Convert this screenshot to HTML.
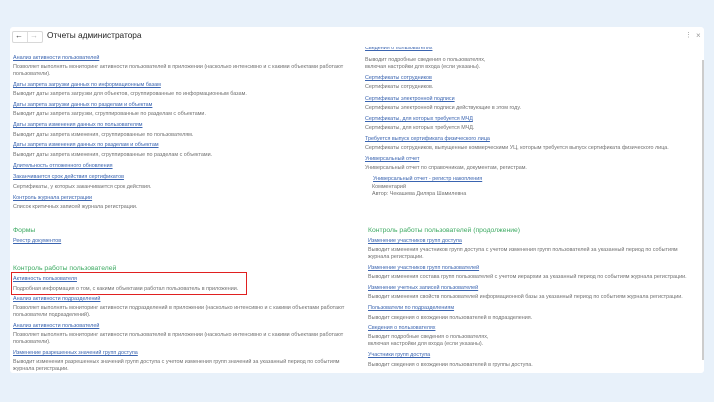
<!DOCTYPE html>
<html><head><meta charset="utf-8"><style>
html,body{margin:0;padding:0;width:714px;height:402px;background:#e8f1fa;overflow:hidden;font-family:"Liberation Sans","Noto Sans CJK SC",sans-serif}
.p{position:absolute;left:10px;top:27px;width:694px;height:346px;background:#fff;border-radius:3px}
.w{position:absolute;left:0;top:2px;width:714px;height:400px}
.t{position:absolute;white-space:nowrap;font-size:5.4px;line-height:7px;color:#6f6f6f}
.l{color:#3a64b0;text-decoration:underline}
.g{color:#3daa62;font-size:6.8px;line-height:9px}
</style></head><body>
<div class="p"></div>
<div style="position:absolute;left:12px;top:31px;width:29px;height:10px;border:1px solid #d8d8d8;border-radius:2px;background:#fff"></div>
<div style="position:absolute;left:27px;top:32px;width:1px;height:10px;background:#ddd"></div>
<div class="t" style="left:15px;top:31px;font-size:8px;line-height:10px;color:#333">&#8592;</div>
<div class="t" style="left:30px;top:31px;font-size:8px;line-height:10px;color:#bbb">&#8594;</div>
<div class="t" style="left:47px;top:30px;font-size:8.3px;line-height:11px;color:#222">Отчеты администратора</div>
<div class="t" style="left:685px;top:31px;font-size:7px;line-height:10px;color:#999">&#8942;</div>
<div class="t" style="left:696px;top:31px;font-size:8px;line-height:10px;color:#999">&#215;</div>
<div style="position:absolute;left:702px;top:60px;width:2px;height:300px;background:#ccc"></div>
<div class="w">
<div class="t l" style="left:13px;top:53px">Анализ активности пользователей</div>
<div class="t" style="left:13px;top:62px">Позволяет выполнять мониторинг активности пользователей в приложении (насколько интенсивно и с какими объектами работают</div>
<div class="t" style="left:13px;top:69px">пользователи).</div>
<div class="t l" style="left:13px;top:80px">Даты запрета загрузки данных по информационным базам</div>
<div class="t" style="left:13px;top:89px">Выводит даты запрета загрузки для объектов, сгруппированные по информационным базам.</div>
<div class="t l" style="left:13px;top:100px">Даты запрета загрузки данных по разделам и объектам</div>
<div class="t" style="left:13px;top:109px">Выводит даты запрета загрузки, сгруппированные по разделам с объектами.</div>
<div class="t l" style="left:13px;top:120px">Даты запрета изменения данных по пользователям</div>
<div class="t" style="left:13px;top:130px">Выводит даты запрета изменения, сгруппированные по пользователям.</div>
<div class="t l" style="left:13px;top:140px">Даты запрета изменения данных по разделам и объектам</div>
<div class="t" style="left:13px;top:150px">Выводит даты запрета изменения, сгруппированные по разделам с объектами.</div>
<div class="t l" style="left:13px;top:161px">Длительность отложенного обновления</div>
<div class="t l" style="left:13px;top:172px">Заканчивается срок действия сертификатов</div>
<div class="t" style="left:13px;top:182px">Сертификаты, у которых заканчивается срок действия.</div>
<div class="t l" style="left:13px;top:193px">Контроль журнала регистрации</div>
<div class="t" style="left:13px;top:202px">Список критичных записей журнала регистрации.</div>

<div class="t g" style="left:13px;top:224px">Формы</div>
<div class="t l" style="left:13px;top:236px">Реестр документов</div>
<div class="t g" style="left:13px;top:262px">Контроль работы пользователей</div>
<div style="position:absolute;left:11px;top:270px;width:234px;height:21px;border:1.5px solid #e02020"></div>
<div class="t l" style="left:13px;top:274px">Активность пользователя</div>
<div class="t" style="left:13px;top:284px">Подробная информация о том, с какими объектами работал пользователь в приложении.</div>
<div class="t l" style="left:13px;top:294px">Анализ активности подразделений</div>
<div class="t" style="left:13px;top:303px">Позволяет выполнять мониторинг активности подразделений в приложении (насколько интенсивно и с какими объектами работают</div>
<div class="t" style="left:13px;top:310px">пользователи подразделений).</div>
<div class="t l" style="left:13px;top:321px">Анализ активности пользователей</div>
<div class="t" style="left:13px;top:330px">Позволяет выполнять мониторинг активности пользователей в приложении (насколько интенсивно и с какими объектами работают</div>
<div class="t" style="left:13px;top:337px">пользователи).</div>
<div class="t l" style="left:13px;top:348px">Изменение разрешенных значений групп доступа</div>
<div class="t" style="left:13px;top:357px">Выводит изменения разрешенных значений групп доступа с учетом изменения групп значений за указанный период по событиям</div>
<div class="t" style="left:13px;top:364px">журнала регистрации.</div>

<div style="position:absolute;left:360px;top:45px;width:340px;height:5px;background:#fff;overflow:hidden"><div class="t l" style="left:5px;top:-2px">Сведения о пользователях</div></div>
<div class="t" style="left:365px;top:55px">Выводит подробные сведения о пользователях,</div>
<div class="t" style="left:365px;top:62px">включая настройки для входа (если указаны).</div>
<div class="t l" style="left:365px;top:73px">Сертификаты сотрудников</div>
<div class="t" style="left:365px;top:82px">Сертификаты сотрудников.</div>
<div class="t l" style="left:365px;top:94px">Сертификаты электронной подписи</div>
<div class="t" style="left:365px;top:103px">Сертификаты электронной подписи действующие в этом году.</div>
<div class="t l" style="left:365px;top:114px">Сертификаты, для которых требуется МЧД</div>
<div class="t" style="left:365px;top:123px">Сертификаты, для которых требуется МЧД.</div>
<div class="t l" style="left:365px;top:134px">Требуется выпуск сертификата физического лица</div>
<div class="t" style="left:365px;top:143px">Сертификаты сотрудников, выпущенные коммерческими УЦ, которым требуется выпуск сертификата физического лица.</div>
<div class="t l" style="left:365px;top:154px">Универсальный отчет</div>
<div class="t" style="left:365px;top:163px">Универсальный отчет по справочникам, документам, регистрам.</div>
<div class="t l" style="left:373px;top:174px">Универсальный отчет - регистр накопления</div>
<div class="t" style="left:372px;top:182px">Комментарий</div>
<div class="t" style="left:372px;top:189px">Автор: Чекашева Диляра Шамилевна</div>

<div class="t g" style="left:368px;top:224px">Контроль работы пользователей (продолжение)</div>
<div class="t l" style="left:368px;top:236px">Изменение участников групп доступа</div>
<div class="t" style="left:368px;top:245px">Выводит изменения участников групп доступа с учетом изменения групп пользователей за указанный период по событиям</div>
<div class="t" style="left:368px;top:252px">журнала регистрации.</div>
<div class="t l" style="left:368px;top:263px">Изменение участников групп пользователей</div>
<div class="t" style="left:368px;top:272px">Выводит изменения состава групп пользователей с учетом иерархии за указанный период по событиям журнала регистрации.</div>
<div class="t l" style="left:368px;top:283px">Изменение учетных записей пользователей</div>
<div class="t" style="left:368px;top:292px">Выводит изменения свойств пользователей информационной базы за указанный период по событиям журнала регистрации.</div>
<div class="t l" style="left:368px;top:303px">Пользователи по подразделениям</div>
<div class="t" style="left:368px;top:313px">Выводит сведения о вхождении пользователей в подразделения.</div>
<div class="t l" style="left:368px;top:323px">Сведения о пользователях</div>
<div class="t" style="left:368px;top:332px">Выводит подробные сведения о пользователях,</div>
<div class="t" style="left:368px;top:339px">включая настройки для входа (если указаны).</div>
<div class="t l" style="left:368px;top:350px">Участники групп доступа</div>
<div class="t" style="left:368px;top:360px">Выводит сведения о вхождении пользователей в группы доступа.</div>
</div>
</body></html>
